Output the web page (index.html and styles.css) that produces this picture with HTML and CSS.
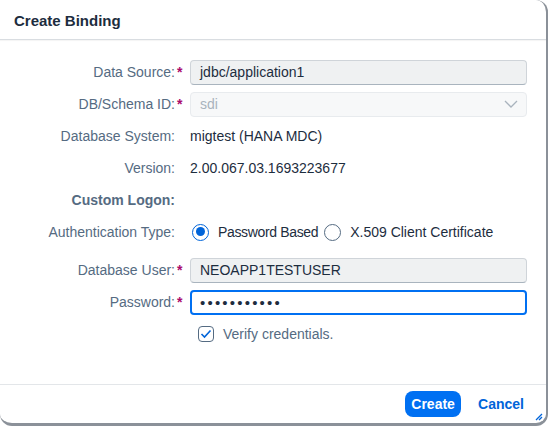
FILE: index.html
```html
<!DOCTYPE html>
<html>
<head>
<meta charset="utf-8">
<link rel="stylesheet" href="styles.css">
</head>
<body>
<div class="dialog">
  <header class="dlg-header"><h1 class="title">Create Binding</h1></header>
  <main class="dlg-content">
    <div class="form">
      <div class="row">
        <div class="lbl"><span class="lbl-text">Data Source:</span><span class="req">*</span></div>
        <div class="field"><div class="input readonly">jdbc/application1</div></div>
      </div>
      <div class="row">
        <div class="lbl"><span class="lbl-text">DB/Schema ID:</span><span class="req">*</span></div>
        <div class="field"><div class="input disabled"><span>sdi</span>
          <svg class="chev" width="14" height="8" viewBox="0 0 14 8"><path d="M1 1 L7 7 L13 1" fill="none" stroke="#a9b3bd" stroke-width="1.3"/></svg></div></div>
      </div>
      <div class="row">
        <div class="lbl"><span class="lbl-text">Database System:</span><span class="req"></span></div>
        <div class="field"><span class="val">migtest (HANA MDC)</span></div>
      </div>
      <div class="row">
        <div class="lbl"><span class="lbl-text">Version:</span><span class="req"></span></div>
        <div class="field"><span class="val">2.00.067.03.1693223677</span></div>
      </div>
      <div class="row">
        <div class="lbl"><span class="lbl-text bold">Custom Logon:</span><span class="req"></span></div>
        <div class="field"></div>
      </div>
      <div class="row row-auth">
        <div class="lbl"><span class="lbl-text">Authentication Type:</span><span class="req"></span></div>
        <div class="field radios">
          <span class="radio on"></span><span class="val r1">Password Based</span>
          <span class="radio"></span><span class="val r2">X.509 Client Certificate</span>
        </div>
      </div>
      <div class="row">
        <div class="lbl"><span class="lbl-text">Database User:</span><span class="req">*</span></div>
        <div class="field"><div class="input readonly">NEOAPP1TESTUSER</div></div>
      </div>
      <div class="row">
        <div class="lbl"><span class="lbl-text">Password:</span><span class="req">*</span></div>
        <div class="field"><div class="input focus">•••••••••••</div></div>
      </div>
      <div class="row">
        <div class="lbl"></div>
        <div class="field check-field">
          <span class="checkbox"><svg width="12" height="10" viewBox="0 0 12 10"><path d="M1.5 5 L4.5 8 L10.5 1.5" fill="none" stroke="#0064d9" stroke-width="1.6"/></svg></span>
          <span class="check-text">Verify credentials.</span>
        </div>
      </div>
    </div>
  </main>
  <footer class="dlg-footer">
    <button class="btn btn-primary">Create</button>
    <button class="btn btn-ghost">Cancel</button>
  </footer>
  <svg class="grip" width="8" height="8" viewBox="0 0 8 8"><path d="M7 1 L1 7 M7 4 L4 7" stroke="#0064d9" stroke-width="1.3"/></svg>
</div>
</body>
</html>
```

FILE: styles.css
```css
html, body {
  margin: 0;
  padding: 0;
  background: #ffffff;
}
body {
  font-family: "Liberation Sans", Arial, sans-serif;
  font-size: 14px;
  color: #1d2d3e;
}
.dialog {
  position: relative;
  width: 548px;
  height: 426px;
  box-sizing: border-box;
  background: #fff;
  border-right: 2px solid #8b9199;
  border-bottom: 3px solid #8b9199;
  border-radius: 6px 12px 12px 12px;
  display: flex;
  flex-direction: column;
}
.dlg-header {
  height: 39px;
  border-bottom: 1px solid #d9dde1;
  box-shadow: 0 1px 1px rgba(0,0,0,0.04);
  display: flex;
  align-items: center;
  padding-left: 14px;
}
.title {
  margin: 0;
  font-size: 15px;
  font-weight: bold;
  color: #1d2d3e;
  position: relative;
  top: 1px;
}
.dlg-content {
  flex: 1;
  padding-top: 16px;
}
.form {
  display: flex;
  flex-direction: column;
}
.row {
  display: grid;
  grid-template-columns: 187px 337px;
  column-gap: 3px;
  height: 32px;
  align-items: center;
}
.row-auth {
  margin-bottom: 6px;
}
.lbl {
  display: flex;
  justify-content: flex-end;
  align-items: center;
  color: #556b82;
}
.lbl-text.bold {
  font-weight: bold;
}
.req {
  width: 12px;
  color: #aa0a6c;
  font-weight: bold;
  text-align: left;
  padding-left: 2px;
  box-sizing: border-box;
}
.field {
  display: flex;
  align-items: center;
}
.val {
  color: #1d2d3e;
}
.input {
  box-sizing: border-box;
  width: 337px;
  height: 25px;
  border-radius: 4px;
  padding: 0 8px 0 9px;
  display: flex;
  align-items: center;
  justify-content: space-between;
}
.readonly {
  background: #eff1f2;
  border: 1px solid #cfd4d9;
  border-bottom-color: #a9b4be;
}
.disabled {
  background: #f7f8f9;
  border: 1px solid #e8ebee;
  color: #a9b3bd;
}
.focus {
  background: #fff;
  border: 2px solid #0070f2;
  padding-left: 8px;
  font-size: 15px;
  letter-spacing: 2.2px;
  justify-content: flex-start;
}
.radio {
  box-sizing: border-box;
  width: 17px;
  height: 17px;
  border-radius: 50%;
  border: 1px solid #556b82;
  background: #fff;
  position: relative;
  flex: none;
}
.radio.on {
  margin-left: 2px;
  border: 1.5px solid #0064d9;
}
.radio.on::after {
  content: "";
  position: absolute;
  left: 2.5px;
  top: 2.5px;
  width: 9px;
  height: 9px;
  border-radius: 50%;
  background: #0064d9;
}
.r1 {
  margin-left: 9px;
  margin-right: 6px;
  letter-spacing: -0.35px;
}
.r2 {
  margin-left: 9px;
}
.check-field {
  padding-left: 8px;
}
.checkbox {
  box-sizing: border-box;
  width: 16px;
  height: 16px;
  border: 1px solid #556b82;
  border-radius: 4px;
  display: flex;
  align-items: center;
  justify-content: center;
  margin-right: 9px;
}
.check-text {
  color: #556b82;
}
.dlg-footer {
  height: 38px;
  border-top: 1px solid #e3e6e9;
  display: flex;
  align-items: center;
  justify-content: flex-end;
  padding-right: 15px;
  gap: 10px;
}
.btn {
  font-family: "Liberation Sans", Arial, sans-serif;
  font-size: 14px;
  font-weight: bold;
  height: 26px;
  border-radius: 8px;
  border: none;
  cursor: pointer;
}
.btn-primary {
  background: #0070f2;
  color: #fff;
  width: 56px;
  padding: 0;
}
.btn-ghost {
  background: transparent;
  color: #0064d9;
  padding: 0 7px;
}
.grip {
  position: absolute;
  right: 3px;
  bottom: 2px;
}
```
